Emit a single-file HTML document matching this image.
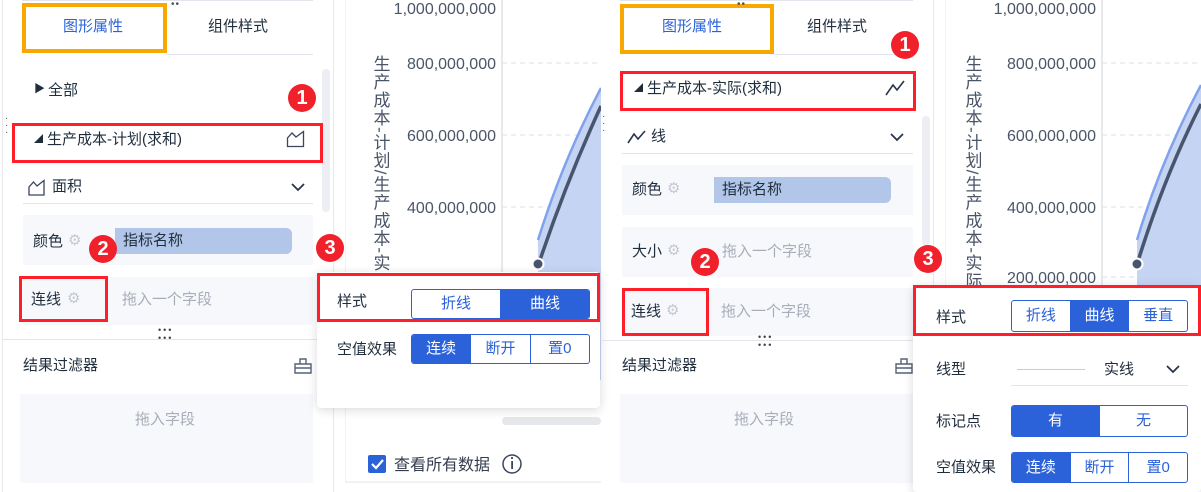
<!DOCTYPE html>
<html><head><meta charset="utf-8">
<style>
*{margin:0;padding:0;box-sizing:border-box}
body{width:1201px;height:492px;overflow:hidden;background:#fff;position:relative;font-family:"Liberation Sans","Noto Sans CJK SC",sans-serif;color:#1f2d3d;font-size:15px}
.a{position:absolute;white-space:nowrap}
.t{line-height:1}
.box{position:absolute;background:#f6f8fc}
.red{position:absolute;border:3px solid #ff1f2a}
.org{position:absolute;border:4px solid #f8a800}
.badge{position:absolute;width:28px;height:28px;border-radius:50%;background:#f0212b;color:#fff;font-weight:bold;font-size:20px;line-height:28px;text-align:center}
.pill{position:absolute;background:#b1c6e8;border-radius:0 6px 6px 0;padding-left:8px;line-height:26px;font-size:15px}
.ph{color:#a8adb8}
.seg{position:absolute;display:flex;border:1px solid #2b62d9;border-radius:3px;overflow:hidden}
.seg div{flex:1;text-align:center;color:#2b62d9;border-left:1px solid #2b62d9;font-size:15px}
.seg div:first-child{border-left:none}
.seg .on{background:#2b62d9;color:#fff}
.pop{position:absolute;background:#fff;box-shadow:0 2px 10px rgba(0,0,0,.15);border-radius:4px}
.line{position:absolute;height:1px;background:#e2e5ec}
.sb{position:absolute;background:#eceef3;border-radius:4px}
.gear{color:#c4c8d0;font-size:15px}
</style></head><body>

<!-- ============ LEFT HALF ============ -->
<div class="a" style="left:2px;top:0;width:1px;height:492px;background:#e8e8ec"></div>
<div class="a" style="left:333px;top:0;width:1px;height:492px;background:#e8e8ec"></div>
<div class="line" style="left:22px;top:0;width:291px"></div>
<div class="org" style="left:22px;top:3px;width:145px;height:50px"></div>
<div class="a t" style="left:63px;top:19px;color:#2b62d9">图形属性</div>
<div class="a t" style="left:208px;top:19px">组件样式</div>
<div class="line" style="left:167px;top:54px;width:146px"></div>
<div class="a t" style="left:171px;top:0px;font-size:10px;letter-spacing:1px;color:#555">••</div>
<div class="sb" style="left:322px;top:69px;width:8px;height:143px"></div>

<div class="a t" style="left:34px;top:84px;font-size:11px">▶</div>
<div class="a t" style="left:48px;top:83px">全部</div>
<div class="badge" style="left:288px;top:84px">1</div>
<div class="a" style="left:5px;top:115px;font-size:10px;line-height:7px;color:#555">·<br>·<br>·</div>

<div class="red" style="left:12px;top:123px;width:311px;height:40px"></div>
<div class="a t" style="left:34px;top:135px;font-size:9px">◢</div>
<div class="a t" style="left:47px;top:132px">生产成本-计划(求和)</div>
<svg class="a" style="left:286px;top:130px" width="20" height="18" viewBox="0 0 20 18"><path d="M1.5 16.5V8L6 3l4 4 7.5-5.5v15z" fill="none" stroke="#3a4560" stroke-width="1.3"/></svg>

<svg class="a" style="left:28px;top:179px" width="18" height="17" viewBox="0 0 18 17"><path d="M1 16V8L5.5 3l3.5 4 7-5.5V16z" fill="none" stroke="#3a4560" stroke-width="1.3"/></svg>
<div class="a t" style="left:52px;top:179px">面积</div>
<svg class="a" style="left:290px;top:182px" width="16" height="10" viewBox="0 0 16 10"><path d="M2 2l6 6 6-6" fill="none" stroke="#2a3448" stroke-width="1.8"/></svg>
<div class="line" style="left:23px;top:203px;width:290px"></div>

<div class="box" style="left:23px;top:215px;width:290px;height:50px"></div>
<div class="a t" style="left:33px;top:234px">颜色</div>
<div class="a t gear" style="left:68px;top:233px">⚙</div>
<div class="pill" style="left:115px;top:228px;width:177px">指标名称</div>
<div class="badge" style="left:89px;top:235px">2</div>

<div class="box" style="left:23px;top:277px;width:290px;height:48px"></div>
<div class="a t" style="left:31px;top:292px">连线</div>
<div class="a t gear" style="left:67px;top:291px">⚙</div>
<div class="a t ph" style="left:122px;top:292px">拖入一个字段</div>
<div class="red" style="left:19px;top:276px;width:89px;height:46px"></div>
<div class="a t" style="left:158px;top:326px;font-size:9px;letter-spacing:2px;color:#444;line-height:8px">•••<br>•••</div>
<div class="line" style="left:2px;top:339px;width:330px"></div>
<div class="a t" style="left:23px;top:358px">结果过滤器</div>
<svg class="a" style="left:294px;top:357px" width="18" height="17" viewBox="0 0 18 17"><path d="M1 7h16v9H1zM6 7V2h6v5M1 11h16" fill="none" stroke="#56607a" stroke-width="1.4"/></svg>
<div class="box" style="left:20px;top:394px;width:293px;height:89px"></div>
<div class="a t ph" style="left:135px;top:412px">拖入字段</div>

<!-- left chart -->
<svg class="a" style="left:345px;top:0" width="256" height="492" viewBox="0 0 256 492" font-family="Liberation Sans,Noto Sans CJK SC,sans-serif">
<line x1="0" y1="0" x2="0" y2="482" stroke="#e4e6ea"/>
<line x1="0" y1="482" x2="256" y2="482" stroke="#e4e6ea"/>
<line x1="157" y1="0" x2="157" y2="380" stroke="#cfd2d8"/>
<g stroke="#dcdfe4" stroke-dasharray="5 4"><line x1="157" y1="63" x2="256" y2="63"/><line x1="157" y1="135" x2="256" y2="135"/><line x1="157" y1="207" x2="256" y2="207"/><line x1="157" y1="278" x2="256" y2="278"/></g>
<g fill="#4a5568" font-size="16" text-anchor="end"><text x="151" y="14">1,000,000,000</text><text x="151" y="69">800,000,000</text><text x="151" y="141">600,000,000</text><text x="151" y="213">400,000,000</text><text x="151" y="284">200,000,000</text></g>
<text x="35" y="55" fill="#4a5568" font-size="17" letter-spacing="1" style="writing-mode:vertical-rl">生产成本-计划/生产成本-实际</text>
<path d="M193,240 Q218,160 256,88 L256,380 L193,380Z" fill="#c6d4f4"/>
<path d="M193,240 Q218,160 256,88" fill="none" stroke="#7fa2ee" stroke-width="2.5"/>
<path d="M195,260 Q222,180 256,106" fill="none" stroke="#48556f" stroke-width="3.5"/>
<circle cx="193" cy="264" r="5.5" fill="#48556f" stroke="#fff" stroke-width="2"/>
<rect x="157" y="417" width="99" height="8" rx="4" fill="#e5e7eb"/>
<rect x="23" y="455" width="18" height="18" rx="2" fill="#2b62d9"/>
<path d="M27 464l4 4 7-8" fill="none" stroke="#fff" stroke-width="2.2"/>
<text x="49" y="470" fill="#333d4f" font-size="16">查看所有数据</text>
<circle cx="167" cy="464" r="9" fill="none" stroke="#3a4560" stroke-width="1.5"/>
<rect x="166.2" y="461" width="1.8" height="8" fill="#3a4560"/><circle cx="167" cy="458" r="1.1" fill="#3a4560"/>
</svg>
<div class="badge" style="left:316px;top:234px">3</div>

<div class="pop" style="left:317px;top:272px;width:283px;height:136px"></div>
<div class="red" style="left:317px;top:273px;width:283px;height:49px"></div>
<div class="a t" style="left:337px;top:294px">样式</div>
<div class="seg" style="left:411px;top:289px;width:179px;height:30px;line-height:28px"><div>折线</div><div class="on">曲线</div></div>
<div class="a t" style="left:337px;top:342px">空值效果</div>
<div class="seg" style="left:411px;top:334px;width:179px;height:30px;line-height:28px"><div class="on">连续</div><div>断开</div><div>置0</div></div>

<!-- ============ RIGHT HALF ============ -->
<div class="a" style="left:933px;top:0;width:1px;height:492px;background:#e8e8ec"></div>
<div class="line" style="left:620px;top:0;width:293px"></div>
<div class="org" style="left:620px;top:4px;width:154px;height:50px"></div>
<div class="a t" style="left:662px;top:19px;color:#2b62d9">图形属性</div>
<div class="a t" style="left:807px;top:19px">组件样式</div>
<div class="line" style="left:774px;top:54px;width:139px"></div>
<div class="a t" style="left:737px;top:0px;font-size:10px;letter-spacing:1px;color:#555">••</div>
<div class="badge" style="left:891px;top:31px">1</div>
<div class="sb" style="left:922px;top:116px;width:8px;height:130px"></div>
<div class="a" style="left:602px;top:113px;font-size:10px;line-height:7px;color:#555">·<br>·<br>·</div>

<div class="red" style="left:620px;top:71px;width:296px;height:40px"></div>
<div class="a t" style="left:634px;top:84px;font-size:9px">◢</div>
<div class="a t" style="left:647px;top:81px">生产成本-实际(求和)</div>
<svg class="a" style="left:884px;top:79px" width="22" height="18" viewBox="0 0 22 18"><path d="M2 16L9 6l4 5L20 2" fill="none" stroke="#2a3448" stroke-width="1.6"/></svg>

<svg class="a" style="left:627px;top:129px" width="20" height="16" viewBox="0 0 20 16"><path d="M1 14L7 5l4 5 7-8" fill="none" stroke="#2a3448" stroke-width="1.6"/></svg>
<div class="a t" style="left:651px;top:129px">线</div>
<svg class="a" style="left:889px;top:132px" width="16" height="10" viewBox="0 0 16 10"><path d="M2 2l6 6 6-6" fill="none" stroke="#2a3448" stroke-width="1.8"/></svg>
<div class="line" style="left:622px;top:153px;width:291px"></div>

<div class="box" style="left:622px;top:165px;width:291px;height:50px"></div>
<div class="a t" style="left:632px;top:182px">颜色</div>
<div class="a t gear" style="left:667px;top:181px">⚙</div>
<div class="pill" style="left:714px;top:177px;width:177px">指标名称</div>

<div class="box" style="left:622px;top:227px;width:291px;height:50px"></div>
<div class="a t" style="left:632px;top:244px">大小</div>
<div class="a t gear" style="left:667px;top:243px">⚙</div>
<div class="a t ph" style="left:722px;top:244px">拖入一个字段</div>
<div class="badge" style="left:691px;top:248px">2</div>

<div class="box" style="left:622px;top:288px;width:291px;height:48px"></div>
<div class="a t" style="left:631px;top:304px">连线</div>
<div class="a t gear" style="left:666px;top:303px">⚙</div>
<div class="a t ph" style="left:721px;top:304px">拖入一个字段</div>
<div class="red" style="left:622px;top:288px;width:87px;height:48px"></div>
<div class="a t" style="left:758px;top:333px;font-size:9px;letter-spacing:2px;color:#444;line-height:8px">•••<br>•••</div>
<div class="line" style="left:602px;top:340px;width:330px"></div>
<div class="a t" style="left:622px;top:358px">结果过滤器</div>
<svg class="a" style="left:895px;top:357px" width="18" height="17" viewBox="0 0 18 17"><path d="M1 7h16v9H1zM6 7V2h6v5M1 11h16" fill="none" stroke="#56607a" stroke-width="1.4"/></svg>
<div class="box" style="left:620px;top:394px;width:293px;height:89px"></div>
<div class="a t ph" style="left:734px;top:412px">拖入字段</div>

<!-- right chart -->
<svg class="a" style="left:945px;top:0" width="256" height="492" viewBox="0 0 256 492" font-family="Liberation Sans,Noto Sans CJK SC,sans-serif">
<line x1="0" y1="0" x2="0" y2="492" stroke="#e4e6ea"/>
<line x1="157" y1="0" x2="157" y2="300" stroke="#cfd2d8"/>
<g stroke="#dcdfe4" stroke-dasharray="5 4"><line x1="157" y1="63" x2="256" y2="63"/><line x1="157" y1="135" x2="256" y2="135"/><line x1="157" y1="207" x2="256" y2="207"/><line x1="157" y1="277" x2="256" y2="277"/></g>
<g fill="#4a5568" font-size="16" text-anchor="end"><text x="151" y="14">1,000,000,000</text><text x="151" y="69">800,000,000</text><text x="151" y="141">600,000,000</text><text x="151" y="213">400,000,000</text><text x="151" y="283">200,000,000</text></g>
<text x="27" y="55" fill="#4a5568" font-size="17" letter-spacing="1" style="writing-mode:vertical-rl">生产成本-计划/生产成本-实际</text>
<path d="M192,240 Q216,160 256,85 L256,300 L192,300Z" fill="#c6d4f4"/>
<path d="M192,240 Q216,160 256,85" fill="none" stroke="#7fa2ee" stroke-width="2.5"/>
<path d="M194,258 Q220,175 256,104" fill="none" stroke="#48556f" stroke-width="3.5"/>
<circle cx="192" cy="264" r="5.5" fill="#48556f" stroke="#fff" stroke-width="2"/>
</svg>
<div class="badge" style="left:914px;top:245px">3</div>

<div class="pop" style="left:913px;top:285px;width:288px;height:207px"></div>
<div class="red" style="left:913px;top:285px;width:288px;height:51px"></div>
<div class="a t" style="left:936px;top:310px">样式</div>
<div class="seg" style="left:1011px;top:300px;width:177px;height:32px;line-height:30px"><div>折线</div><div class="on">曲线</div><div>垂直</div></div>
<div class="a t" style="left:936px;top:362px">线型</div>
<div class="a" style="left:1017px;top:369px;width:68px;height:1px;background:#c9ccd3"></div>
<div class="a t" style="left:1104px;top:362px">实线</div>
<svg class="a" style="left:1165px;top:364px" width="16" height="10" viewBox="0 0 16 10"><path d="M2 2l6 6 6-6" fill="none" stroke="#2a3448" stroke-width="1.8"/></svg>
<div class="line" style="left:1011px;top:385px;width:177px"></div>
<div class="a t" style="left:936px;top:414px">标记点</div>
<div class="seg" style="left:1011px;top:405px;width:177px;height:32px;line-height:30px"><div class="on">有</div><div>无</div></div>
<div class="a t" style="left:936px;top:460px">空值效果</div>
<div class="seg" style="left:1011px;top:452px;width:177px;height:31px;line-height:29px"><div class="on">连续</div><div>断开</div><div>置0</div></div>

</body></html>
